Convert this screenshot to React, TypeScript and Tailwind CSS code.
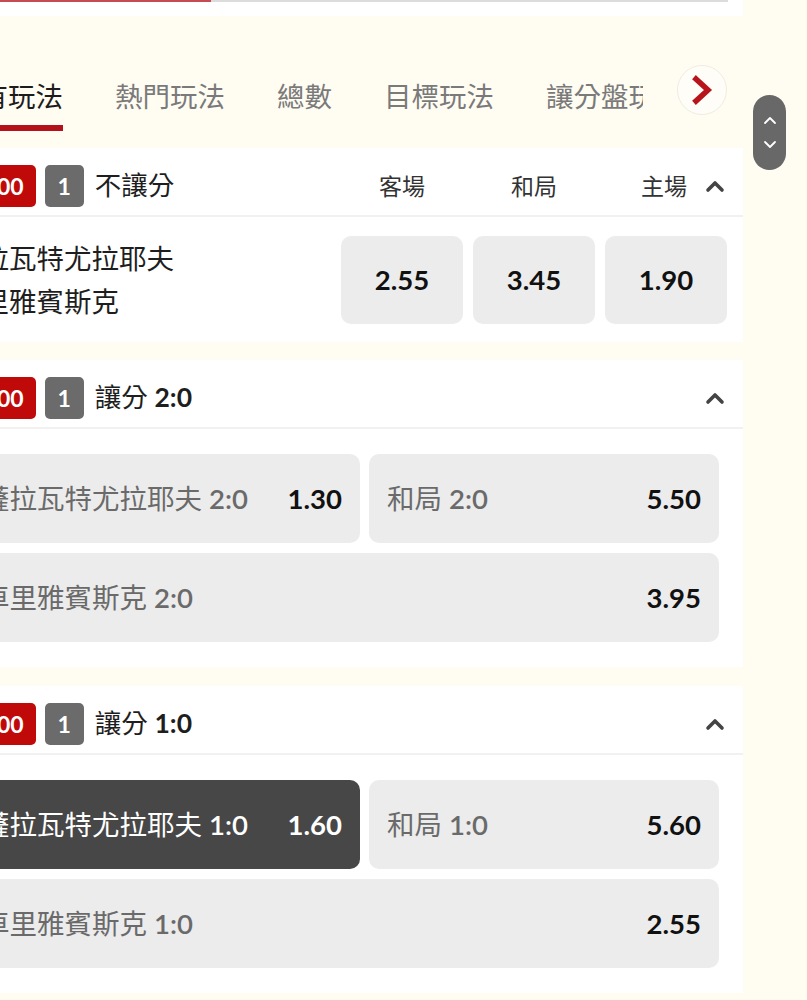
import React from "react";

const ChevUp = () => (
  <svg width="20" height="14" viewBox="0 0 20 14" className="shrink-0">
    <polyline points="3,11 10,4 17,11" fill="none" stroke="#444" strokeWidth="3.6" strokeLinecap="round" strokeLinejoin="round" />
  </svg>
);

const Badges = () => (
  <div className="flex items-center gap-[9px] shrink-0">
    <div className="h-[42px] px-[12px] rounded-[5px] bg-[#c00a0a] text-white text-[23px] font-bold flex items-center leading-none">00</div>
    <div className="h-[42px] w-[39px] rounded-[5px] bg-[#6b6b6b] text-white text-[23px] font-bold flex items-center justify-center leading-none">1</div>
  </div>
);

type Cell = { label: string; score: string; odds: string; dark?: boolean };

const OddsBox = ({ c, className }: { c: Cell; className: string }) => (
  <div
    className={`h-[89px] rounded-[10px] px-[18px] flex items-center justify-between ${className} ${
      c.dark ? "bg-[#474747] text-white" : "bg-[#ececec] text-[#6a6a6a]"
    }`}
  >
    <span className="text-[27.5px] whitespace-nowrap">
      {c.label} <span className="font-semibold">{c.score}</span>
    </span>
    <span className={`text-[27.5px] font-bold ${c.dark ? "text-white" : "text-[#111]"}`}>{c.odds}</span>
  </div>
);

const HandicapCard = ({ score, a, b, c }: { score: string; a: Cell; b: Cell; c: Cell }) => (
  <div className="bg-white">
    <div className="h-[67px] pt-[17px] pl-[45px] pr-[18px] flex items-start">
      <div className="h-[42px] flex items-center flex-1">
        <Badges />
        <span className="ml-[11px] text-[26.5px] text-[#1e1e1e] whitespace-nowrap">
          讓分 <span className="font-bold">{score}</span>
        </span>
      </div>
      <div className="h-[42px] flex items-center">
        <ChevUp />
      </div>
    </div>
    <div className="h-[2px] bg-[#f1f1f1]" />
    <div className="px-[24px] pt-[25px] pb-[25px] flex flex-col gap-[10px]">
      <div className="flex gap-[9px]">
        <OddsBox c={a} className="flex-1" />
        <OddsBox c={b} className="w-[350px] shrink-0" />
      </div>
      <OddsBox c={c} className="w-full" />
    </div>
  </div>
);

export default function App() {
  const tabs = ["所有玩法", "熱門玩法", "總數", "目標玩法", "讓分盤玩法", "波膽"];
  return (
    <div className="min-h-screen bg-[#fffcf2] overflow-hidden font-['Lato','Noto_Sans_CJK_TC',sans-serif]">
      <div className="flex items-start">
        {/* main column */}
        <div className="-ml-[60px] w-[803px] shrink-0">
          {/* top strip */}
          <div className="h-[16px] bg-white">
            <div className="flex h-[2px]">
              <div className="w-[271px] bg-[#c84a52]" />
              <div className="w-[517px] bg-[#dcdcdc]" />
            </div>
          </div>

          {/* tabs */}
          <div className="h-[115px] flex items-start mb-[17px]">
            <div className="ml-[13px] w-[690px] overflow-hidden shrink-0">
              <div className="flex gap-[52px] whitespace-nowrap pt-[67px]">
                {tabs.map((t, i) => (
                  <div key={t} className="flex flex-col shrink-0">
                    <span
                      className={`text-[27.5px] leading-[28px] ${i === 0 ? "text-[#1c1c1c]" : "text-[#7a7a7a]"}`}
                    >
                      {t}
                    </span>
                    <div className={`mt-[14px] h-[6px] ${i === 0 ? "bg-[#b3121b]" : "bg-transparent"}`} />
                  </div>
                ))}
              </div>
            </div>
            <div className="ml-[34px] mt-[49px] w-[50px] h-[50px] rounded-full bg-[#fffdf8] border border-[#f0ece2] flex items-center justify-center shrink-0">
              <svg width="22" height="30" viewBox="0 0 22 30">
                <polyline points="5,4 17,15 5,26" fill="none" stroke="#b8141c" strokeWidth="5.5" strokeLinecap="square" strokeLinejoin="miter" />
              </svg>
            </div>
          </div>

          {/* card 1 */}
          <div className="bg-white">
            <div className="h-[67px] pt-[17px] pl-[45px] pr-[16px] flex items-start">
              <div className="h-[42px] flex items-center flex-1">
                <Badges />
                <span className="ml-[11px] text-[26.5px] text-[#1e1e1e]">不讓分</span>
              </div>
              <div className="h-[42px] flex items-center gap-[10px] text-[23px] text-[#333]">
                <div className="w-[122px] text-center">客場</div>
                <div className="w-[122px] text-center">和局</div>
                <div className="w-[122px] flex items-center justify-end gap-[18px] pr-[2px]">
                  <span>主場</span>
                  <ChevUp />
                </div>
              </div>
            </div>
            <div className="h-[2px] bg-[#f1f1f1]" />
            <div className="pl-[14px] pr-[16px] pt-[19px] pb-[18px] flex items-center">
              <div className="flex-1 flex flex-col text-[27.5px] leading-[43px] text-[#1e1e1e] whitespace-nowrap">
                <span>薩拉瓦特尤拉耶夫</span>
                <span>車里雅賓斯克</span>
              </div>
              <div className="flex gap-[10px]">
                {["2.55", "3.45", "1.90"].map((o) => (
                  <div
                    key={o}
                    className="w-[122px] h-[88px] rounded-[10px] bg-[#ececec] flex items-center justify-center text-[27.5px] font-bold text-[#111]"
                  >
                    {o}
                  </div>
                ))}
              </div>
            </div>
          </div>

          <div className="h-[18px]" />

          <HandicapCard
            score="2:0"
            a={{ label: "薩拉瓦特尤拉耶夫", score: "2:0", odds: "1.30" }}
            b={{ label: "和局", score: "2:0", odds: "5.50" }}
            c={{ label: "車里雅賓斯克", score: "2:0", odds: "3.95" }}
          />

          <div className="h-[19px]" />

          <HandicapCard
            score="1:0"
            a={{ label: "薩拉瓦特尤拉耶夫", score: "1:0", odds: "1.60", dark: true }}
            b={{ label: "和局", score: "1:0", odds: "5.60" }}
            c={{ label: "車里雅賓斯克", score: "1:0", odds: "2.55" }}
          />
        </div>

        {/* right rail */}
        <div className="flex-1">
          <div className="ml-[10px] mt-[95px] w-[33px] h-[75px] rounded-full bg-[#686868] flex flex-col items-center justify-center gap-[15px]">
            <svg width="14" height="9" viewBox="0 0 14 9">
              <polyline points="2,7 7,2 12,7" fill="none" stroke="#fff" strokeWidth="1.8" strokeLinecap="round" strokeLinejoin="round" />
            </svg>
            <svg width="14" height="9" viewBox="0 0 14 9">
              <polyline points="2,2 7,7 12,2" fill="none" stroke="#fff" strokeWidth="1.8" strokeLinecap="round" strokeLinejoin="round" />
            </svg>
          </div>
        </div>
      </div>
    </div>
  );
}
